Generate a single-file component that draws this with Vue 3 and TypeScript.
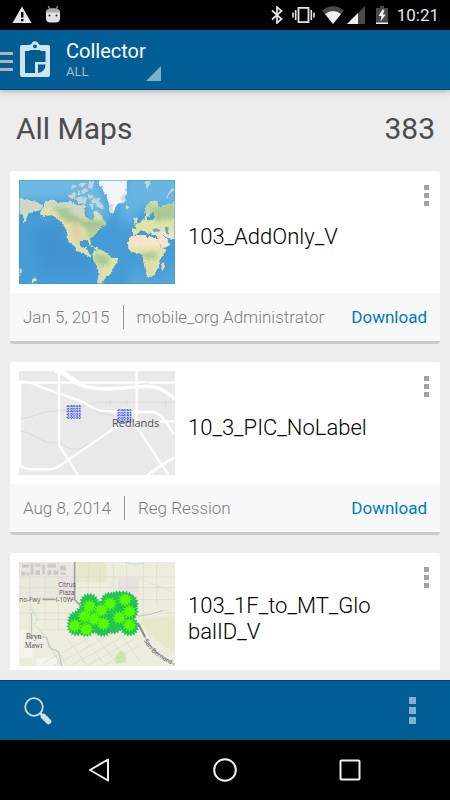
<script setup lang="ts">
interface MapItem {
  id: string
  title: string
  date?: string
  owner?: string
  thumb: 'world' | 'streets' | 'topo'
}

const maps: MapItem[] = [
  { id: 'a', title: '103_AddOnly_V', date: 'Jan 5, 2015', owner: 'mobile_org Administrator', thumb: 'world' },
  { id: 'b', title: '10_3_PIC_NoLabel', date: 'Aug 8, 2014', owner: 'Reg Ression', thumb: 'streets' },
  { id: 'c', title: '103_1F_to_MT_GlobalID_V', thumb: 'topo' },
]

const total = 383

// Points of a spiky marker centred on (cx, cy).
function burst(cx: number, cy: number, outer: number, inner: number, spikes = 18): string {
  const pts: string[] = []
  for (let i = 0; i < spikes * 2; i++) {
    const r = i % 2 ? inner : outer
    const a = (Math.PI * i) / spikes
    pts.push(`${(cx + r * Math.cos(a)).toFixed(1)},${(cy + r * Math.sin(a)).toFixed(1)}`)
  }
  return pts.join(' ')
}

const markers: [number, number][] = [
  [238, 160], [300, 156], [345, 153], [324, 152], [356, 162], [356, 186], [272, 182],
  [224, 196], [252, 208], [328, 200], [300, 190], [202, 212], [200, 230], [228, 232], [278, 232], [358, 230], [310, 224], [256, 222],
]

const hearts: [number, number][] = [
  [238, 170], [300, 162], [345, 150], [358, 186], [273, 182], [224, 200], [252, 208], [328, 204], [194, 228], [229, 239], [280, 222], [358, 226],
]

const buildings: [number, number, number, number][] = [
  [36, 44, 20, 10], [62, 42, 9, 34], [76, 42, 16, 9], [97, 44, 8, 30], [112, 42, 26, 12],
  [34, 66, 12, 12], [50, 68, 8, 10], [76, 62, 14, 14], [112, 62, 12, 14], [130, 62, 14, 14], [150, 48, 18, 14], [152, 68, 16, 8],
]
</script>

<template>
  <div class="screen">
    <div class="status">
      <div class="status-group left">
        <svg width="20" height="18" viewBox="0 0 20 18"><path d="M10 0.5 19.5 17H.5z" fill="#e6e6e6" /><path d="M9 6h2.4v5.5H9zM9 13h2.4v2.2H9z" fill="#000" /></svg>
        <svg width="16" height="18" viewBox="0 0 16 18"><path d="M3.2 0l2 3.6M12.8 0l-2 3.6" stroke="#999" stroke-width="1.200" /><path d="M1 6Q1 2.500 8 2.500T15 6v6.500q0 4-4.500 4h-5q-4.500 0-4.500-4z" fill="#e2e2e2" /><path d="M1 6.500Q1 2.500 8 2.500T15 6.500z" fill="#aaa" /><circle cx="4.500" cy="9.500" r="1" fill="#222" /><circle cx="11.500" cy="9.500" r="1" fill="#222" /></svg>
      </div>
      <div class="status-group right">
        <svg width="12" height="18" viewBox="0 0 12 18"><path d="M1 4.500l9.500 8.500L6 17V1l4.500 4L1 13.500" fill="none" stroke="#e6e6e6" stroke-width="1.700" /></svg>
        <svg width="23" height="18" viewBox="0 0 23 18"><path d="M6.500 1.800h10v14.400h-10z" fill="none" stroke="#e6e6e6" stroke-width="1.800" /><path d="M3.700 4v10M1 6.500v5M19.300 4v10M22 6.500v5" stroke="#e6e6e6" stroke-width="1.600" /></svg>
        <svg class="wifi" width="22" height="18" viewBox="0 0 22 18"><path d="M0 4.500Q11-4 22 4.500L11 18z" fill="#4a4a4a" /><path d="M3 8Q11 2 19 8l-8 10z" fill="#f0f0f0" /></svg>
        <svg class="signal" width="18" height="18" viewBox="0 0 18 18"><path d="M18 0v18H0z" fill="#4a4a4a" /><path d="M11 7v11H0z" fill="#f0f0f0" /></svg>
        <svg class="battery" width="12" height="18" viewBox="0 0 12 18"><path d="M0 2h4V0h4v2h4v16H0z" fill="#4a4a4a" /><path d="M0 16.500h12V18H0z" fill="#f0f0f0" /><path d="M6.500 3.500L2.500 10h3l-1 5.500L9.800 8.500H6.800L8.500 4z" fill="#f4f4f4" /></svg>
        <span class="clock">10:21</span>
      </div>
    </div>

    <header class="appbar">
      <button class="drawer" aria-label="Open menu"><i></i><i></i><i></i></button>
      <svg class="logo" width="30" height="37" viewBox="0 0 30 37">
        <path fill="#cfe2ee" fill-rule="evenodd" d="M2 4H9.500l2-1Q12 .3 15 .3T18.500 3l2 1H28q2 0 2 2v28q0 2-2 2H2q-2 0-2-2V6Q0 4 2 4zM5 10v22h10V21h10.500V10h-4q-1.500 0-1.500-1H10q0 1-1.500 1z M15 3.400a1.900 1.900 0 1 0 .01 0z M18 23.500V32q7.500-1 7.500-8.500z" />
      </svg>
      <button class="spinner">
        <span class="names"><span class="app">Collector</span><span class="filter">ALL</span></span>
        <svg width="15" height="15" viewBox="0 0 15 15"><path d="M15 0v15H0z" fill="#7faec9" /></svg>
      </button>
    </header>

    <main class="content">
      <div class="heading"><h1>All Maps</h1><span class="count">{{ total }}</span></div>
      <div class="list">
        <article v-for="m in maps" :key="m.id" class="card">
          <div class="card-body">
            <svg v-if="m.thumb === 'world'" class="thumb" viewBox="27 30 468 312" preserveAspectRatio="none">
              <defs>
                <filter id="soft" x="-20%" y="-20%" width="140%" height="140%"><feGaussianBlur stdDeviation="6" /></filter>
                <filter id="haze" x="-20%" y="-20%" width="140%" height="140%"><feGaussianBlur stdDeviation="16" /></filter>
                <filter id="rough"><feTurbulence type="fractalNoise" baseFrequency="0.08" numOctaves="3" seed="4" /><feDisplacementMap in="SourceGraphic" scale="12" xChannelSelector="R" yChannelSelector="G" /></filter>
                <clipPath id="land">
                  <path d="M105 100l7-9 20 1 20 6 28-3 20 10 24 2 2 13-6 12 12 11 14 8 7-10-3-16 10-3 10 8 6 10 16 20-6 6-18 2 8 6-14 7-6 9-6 9-12 8 6 14-5 2-7-12-12-1-10 4-1 13 8 6 7-3 6 1-3 10 8 2 3 10 9 6-5 4-13-9-15-5-14-7-12-16-12-13-6-14-1-21-12-16-12-15-19-11-18 1-13 7 6-10-11-6z" />
                  <path d="M249 246l14-8 14 3 14 9 13 12 19 6-1 13-12 12-7 19-14 7-7 12-9 11h-12l3-22 1-20-6-16-10-14z" />
                  <path d="M360 202l15-7 25 0 11 7 13-2 16 5 10 20 9 12 10 1-8 17-12 13-2 22-6 15-15 15-14 0-7-20-5-25-2-20-13-7-20 0-11-13 1-20z" />
                  <path d="M366 192v-14h14l-6-13 15-7 12-8 1-12 8 3 0 10 18-1 5-13-3-16-10 17-13 2-4-15 10-22 14-12 20 4-4 15 24-5 33-10v117l-14-6-17-4-10-8-16 1-14 0-8-9-3 8-18-14-7 1-10 9z" />
                  <path d="M440 196l14-4 22 22 4 10-20 12-12-17z" />
                  <path d="M27 84l25 8 28 4 16 10-4 14-22 5-15 5-8 23-8 3 1-22-13-4zM27 293l9 12-4 12-5 5zM68 328l8-7 2 10-9 10-5 1zM456 282l7-5 2 11-7 14-4-5z" />
                  <path d="M372 140l7 5 3 14-10 5 1-10zM343 110l12-3 5 6-9 6zM237 224l14 4-2 3-12-5zM252 232l13 3-5 4-9-3z" />
                </clipPath>
              </defs>
              <rect x="27" y="30" width="468" height="312" fill="#469cd6" />
              <g filter="url(#haze)">
                <path d="M0 0h262l40 130-30 30-80-70-192 10z" fill="#6db9e3" />
                <path d="M350 0h175v110l-120 0-60 60-20-50z" fill="#69b5e2" />
                <path d="M60 180l90-20 30 60 60 30v60H90z" fill="#3f95d1" />
                <path d="M380 270l20 50 70 10 25-60h30v102H350z" fill="#5aa7da" />
              </g>
              <g filter="url(#rough)">
                <g clip-path="url(#land)">
                  <rect x="20" y="25" width="480" height="320" fill="#dfe3a8" />
                  <g filter="url(#soft)">
                    <path d="M20 70h80l10 20h120l60 40-60 10-80-20-50-5-80 30z" fill="#cfd8c6" />
                    <path d="M125 108l50 10 40 30 75 5 0 22-50 12-30-24-50-12z" fill="#a5c496" />
                    <path d="M240 175h30l-20 35-28-5z" fill="#b8d08c" />
                    <path d="M175 165l22-10 18 30-2 20 15 30-25-8z" fill="#e3cfa6" />
                    <path d="M255 252l35 3 10 25-25 10-22-15z" fill="#a4c994" />
                    <path d="M262 290l10 0 2 50h-16z" fill="#e0c8b8" />
                    <path d="M350 195h98l4 35-100 2zM440 190l55-5v50h-50z" fill="#f7e4cc" />
                    <path d="M395 250l45-5 2 18-40 5zM420 112l75-15v50l-65 6z" fill="#abc893" />
                    <path d="M400 105l30-15-10 35-20 10z" fill="#bdcfae" />
                    <path d="M405 285h20l-8 30z" fill="#e8cda8" />
                  </g>
                </g>
                <path d="M262 28h89l-2 48-14 20-14 8-12 27-11-8-2-24-9-26-8-20-12-10z" fill="#f2f6f8" />
                <path d="M335 75l14-10-3 28-14 8zM298 100l10 6 0 24-10-6z" fill="#d5dfdf" />
                <path d="M174 74l18-8 7 14-16 9zM196 84l22-5 12 10-4 14-20-4zM183 49l10-6 9 9-14 7zM206 43l14-8 10 9-14 9zM213 58l17-4 5 10-18 6zM237 33l15 0-4 24-14-4zM232 75l15-4 2 12-12 4zM252 80l18 9 8 20-4 12-14-14-14-8 2-13zM238 102l9-2 3 13-9 4zM202 65l8 0 2 9-9 2zM403 35l18-4-3 16-9 8zM470 82q-2-20 22-26l0 6q-15 5-16 18z" fill="#c5d4d6" />
              </g>
              <path d="M428 178l12-3 12 6-6 4-16 0zM466 170l10 2-2 14 5 8-9-1-5-14z" fill="#63abd6" />
              <path d="M228 128l12-8 10 10 0 22-8-4-10-10z" fill="#68b1dd" />
              <path d="M92 142q24 18 58-1" fill="none" stroke="#8abdd0" stroke-width="2" stroke-dasharray="5 3" />
              <rect x="28.500" y="31.500" width="465" height="309" fill="none" stroke="#329bd9" stroke-width="3" opacity=".5" />
            </svg>

            <svg v-else-if="m.thumb === 'streets'" class="thumb" viewBox="27 27 468 312" preserveAspectRatio="none">
              <rect x="27" y="27" width="468" height="312" fill="#e9e9e9" />
              <g fill="none" stroke="#d2d2d2" stroke-width="2">
                <path d="M27 170l30-4 50-16 60-6 70-15 20-8h238M27 207l25 4 55 29 40 2 32 18 28 2 30-16M245 140l20 12 50 10" />
                <path d="M300 115v14M350 115v14M467 115v16" />
              </g>
              <g fill="none" stroke="#fff" stroke-linejoin="round">
                <path d="M30 60v255M27 62h468M380 27v170M147 27v222l10 16 46 74" stroke-width="7" />
                <path d="M135 27q25 5 44 22t45 24q24 8 70 8l90-6q40-5 65 5 24 12 46 30" stroke-width="11" />
                <path d="M155 27l50 32" stroke-width="8" />
                <path d="M27 58q35 1 60 15l135 48q30 22 50 25l60 4h90q20 0 33 15t37 52" stroke-width="7" />
                <path d="M27 311q20 11 42 11h48q20 0 40-16l160-110q30-22 43-15 15 5 32 31l56 86 28 41M495 287q-30 13-82 52M445 178h50" stroke-width="7" />
              </g>
              <path d="M384 67l35-4" stroke="#dedede" stroke-width="2" />
              <g>
                <path d="M170 129h43v43h-43zM322 141h43v43h-43z" fill="#bcc4f0" opacity=".6" />
                <path d="M170 133h43M170 141h43M170 149h43M170 157h43M170 166h43M175 129v43M184 129v43M192 129v43M201 129v43M209 129v43M322 145h43M322 153h43M322 161h43M322 169h43M322 178h43M327 141v43M336 141v43M344 141v43M353 141v43M361 141v43" stroke="#4355d4" stroke-width="3" stroke-dasharray="5 4 3 3" />
              </g>
              <text x="306" y="194" class="city">Redlands</text>
            </svg>

            <svg v-else class="thumb" viewBox="27 37 468 312" preserveAspectRatio="none">
              <rect x="27" y="37" width="468" height="312" fill="#eceddd" />
              <path d="M27 37h168v110H27z" fill="#e9e8df" />
              <path d="M150 80h45v70l-45-8zM325 85h60v80l-60-10z" fill="#eae0df" />
              <path d="M80 325h60v24H80zM27 240h40v85H27z" fill="#f4f3ec" />
              <path d="M200 37h90v60h-90zM390 210l105-10v110l-80-55z" fill="#e5e9ca" />
              <rect v-for="(b, i) in buildings" :key="i" :x="b[0]" :y="b[1]" :width="b[2]" :height="b[3]" fill="#cbcac6" />
              <g stroke="#d9d9cb" stroke-width="2" fill="none">
                <path d="M27 82h468M27 114h468M27 190h180M80 210h100M60 37v230M105 80v150M145 37v200M235 37v100M270 37v90M310 37v80M350 37v80M400 37v180M440 37v130M385 150h110M390 190h105M90 240h90M385 85l110 45" />
                <path d="M100 340l200-110M130 349l220-120M180 349l190-105M230 349l150-85M280 349l110-62M130 290l40 55M170 265l60 80M210 250l70 90M250 250l70 90M290 250l60 80M330 250l60 85" />
              </g>
              <path d="M315 325l18-24 12 12 4 24-30 5z" fill="#cee4ab" />
              <path d="M60 170l22 35-8 22 30 30 25 50 22 35M345 37l25 7 30-3" fill="none" stroke="#a8d8d8" stroke-width="3" stroke-dasharray="6 3" />
              <path d="M65 262h45l8 32 28 12 9 43M65 190v80M385 200q40-5 75-18" fill="none" stroke="#c2c0c0" stroke-width="3" />
              <path d="M194 37v112l18 20M97 149h40M185 149h10" fill="none" stroke="#a29da4" stroke-width="5" />
              <path d="M385 222l20 40" fill="none" stroke="#89858a" stroke-width="6" />
              <path d="M405 262q20 45 90 83" fill="none" stroke="#c5c1c4" stroke-width="5" />
              <g class="labels">
                <text x="145" y="113">Citrus</text>
                <text x="147" y="135">Plaza</text>
                <text x="28" y="156">no-Fwy</text>
                <text x="137" y="156">I-10W</text>
                <text x="48" y="269" class="serif">Bryn</text>
                <text x="44" y="295" class="serif">Mawr</text>
                <path id="freeway" d="M402 272q18 48 105 82" fill="none" />
                <text><textPath href="#freeway">San-Bernard</textPath></text>
              </g>
              <polygon v-for="(p, i) in markers" :key="'o' + i" :points="burst(p[0], p[1], 30, 23)" fill="#22c552" stroke="#1baa68" stroke-width="1" />
              <polygon v-for="(p, i) in hearts" :key="'i' + i" :points="burst(p[0], p[1], 23, 13, 12)" fill="#58fc00" />
            </svg>

            <h2>{{ m.title }}</h2>
            <button class="dots" :aria-label="'Options for ' + m.title"><i></i><i></i><i></i></button>
          </div>
          <div v-if="m.date" class="card-foot">
            <span class="date">{{ m.date }}</span>
            <span class="owner">{{ m.owner }}</span>
            <button class="download">Download</button>
          </div>
        </article>
      </div>
    </main>

    <footer class="toolbar">
      <button class="search" aria-label="Search">
        <svg width="28" height="28" viewBox="0 0 28 28"><circle cx="10" cy="10" r="8.800" fill="none" stroke="#cbdfeb" stroke-width="1.800" /><path d="M16 16l3 3" stroke="#cbdfeb" stroke-width="2.500" /><path d="M19.500 19.500l5 5" stroke="#cbdfeb" stroke-width="5.500" stroke-linecap="round" /></svg>
      </button>
      <button class="dots large" aria-label="More options"><i></i><i></i><i></i></button>
    </footer>

    <nav class="sysnav">
      <button aria-label="Back"><svg width="24" height="24" viewBox="0 0 24 24"><path d="M20 1.500v21L2 12z" /></svg></button>
      <button aria-label="Home"><svg width="24" height="24" viewBox="0 0 24 24"><circle cx="12" cy="12" r="10.800" /></svg></button>
      <button aria-label="Recent apps"><svg width="24" height="24" viewBox="0 0 24 24"><rect x="2.500" y="2.500" width="19" height="19" rx="1" /></svg></button>
    </nav>
  </div>
</template>

<style>
body {
  background: #ededed;
}
</style>

<style scoped>
.screen {
  display: flex;
  flex-direction: column;
  height: 100vh;
  overflow: hidden;
  background: #ededed;
  font-family: Roboto, "Liberation Sans", sans-serif;
  color: #000;
}
button {
  padding: 0;
  border: 0;
  background: none;
  font: inherit;
  color: inherit;
  cursor: pointer;
}
svg {
  display: block;
  flex: none;
}
.status {
  flex: none;
  display: flex;
  justify-content: space-between;
  height: 30px;
  padding: 0 11px 0 12px;
  background: #000;
}
.status-group {
  display: flex;
  align-items: center;
}
.left {
  gap: 13px;
}
.right {
  gap: 9px;
}
.wifi {
  margin-left: -2px;
}
.signal {
  margin-left: -6px;
}
.battery {
  margin-left: 2px;
}
.clock {
  font-size: 17px;
  line-height: 32px;
  color: #e6e6e6;
}
.appbar {
  flex: none;
  display: flex;
  align-items: center;
  box-sizing: border-box;
  height: 60px;
  background: #005e95;
  border-bottom: 1px solid #003f86;
  box-shadow: 0 1px 6px rgba(0, 0, 0, 0.3);
  z-index: 1;
}
.drawer {
  display: flex;
  flex-direction: column;
  gap: 5px;
  width: 13px;
  margin: 3px 7px 0 0;
}
.drawer i {
  height: 3px;
  background: #b0b4b8;
}
.spinner {
  display: flex;
  align-items: flex-end;
  margin-left: 16px;
  text-align: left;
}
.names {
  display: flex;
  flex-direction: column;
  padding-top: 2px;
}
.app {
  font-size: 20px;
  line-height: 23px;
  color: #fff;
}
.filter {
  font-size: 13px;
  line-height: 18px;
  color: #a9bccb;
}
.content {
  flex: 1;
  display: flex;
  flex-direction: column;
  min-height: 0;
  padding: 0 10px 10px;
}
.heading {
  flex: none;
  display: flex;
  justify-content: space-between;
  align-items: center;
  height: 77px;
  padding: 0 5px 4px 6px;
  font-size: 30px;
  color: #4c4c4c;
}
.heading h1 {
  margin: 0;
  font-size: 30px;
  font-weight: 400;
}
.list {
  flex: 1;
  display: flex;
  flex-direction: column;
  gap: 18px;
  min-height: 0;
  overflow: hidden;
}
.card {
  flex: none;
  background: #fff;
  border-radius: 3px;
  border-bottom: 3px solid #c9cccb;
  overflow: hidden;
}
.card-body {
  display: flex;
  align-items: center;
  padding: 9px;
}
.thumb {
  width: 156px;
  height: 104px;
}
h2 {
  flex: 1;
  margin: 0 46px 0 13px;
  padding-top: 10px;
  font-size: 22px;
  font-weight: 300;
  line-height: 26px;
  word-break: break-all;
}
.dots {
  display: flex;
  flex-direction: column;
  gap: 3px;
  align-self: flex-start;
  padding: 5px 2px;
}
.dots i {
  width: 5px;
  height: 5px;
  background: #a0a2a5;
}
.card-foot {
  display: flex;
  align-items: center;
  height: 48px;
  padding: 0 13px;
  background: #f7f9f9;
  font-size: 17px;
  font-weight: 300;
  color: #7c7c7c;
}
.date {
  padding-right: 13px;
  border-right: 1px solid #999;
  line-height: 24px;
}
.owner {
  flex: 1;
  padding-left: 13px;
}
.download {
  font-weight: 400;
  color: #0079c1;
}
.toolbar {
  flex: none;
  display: flex;
  justify-content: space-between;
  align-items: center;
  box-sizing: border-box;
  height: 60px;
  padding: 0 34px 0 24px;
  background: #005e95;
  border-top: 1px solid #003f86;
}
.large {
  align-self: center;
  padding: 0;
}
.large i {
  width: 7px;
  height: 7px;
  background: #85afcb;
}
.sysnav {
  flex: none;
  display: flex;
  justify-content: center;
  align-items: center;
  gap: 101px;
  height: 60px;
  background: #000;
}
.sysnav svg {
  fill: none;
  stroke: #f0f0f0;
  stroke-width: 2;
  stroke-linejoin: round;
}
.city {
  font: 33px "Open Sans", sans-serif;
  fill: #4c4c4c;
}
.labels text {
  font: 19px "Open Sans", sans-serif;
  fill: #505050;
}
.labels .serif {
  font: 23px "Liberation Serif", serif;
}
</style>
